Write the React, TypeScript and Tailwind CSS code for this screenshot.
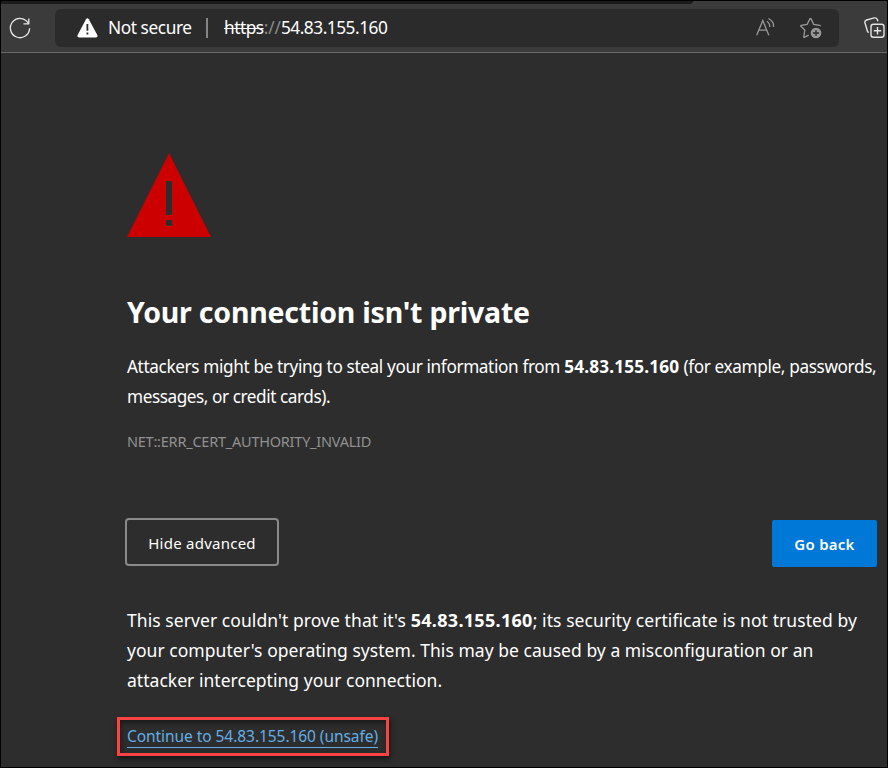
function Toolbar() {
  return (
    <header className="flex h-[52px] flex-col border-b border-[#686868] bg-[#3b3b3b]">
      <div className="h-[3px] w-[692px] shrink-0 rounded-br-lg bg-[#1b1b1b]" />
      <div className="mt-[5px] flex h-[38px] items-center">
        <svg className="ml-[7px] -mt-px shrink-0" width="24" height="24" viewBox="0 0 24 24" fill="none" stroke="#e8e8e8" strokeWidth="1.3">
          <path d="M20.5 7.6A9.6 9.6 0 1 0 21.6 12.3" />
          <path d="M20.8 2.5v5.3h-5.4" />
        </svg>
        <div className="ml-[23px] flex h-[38px] w-[784px] shrink-0 items-center rounded-md bg-[#2b2b2b]">
          <svg className="ml-[22px] -mt-px shrink-0" width="21" height="20" viewBox="0 0 21 20">
            <path d="M9 1.3Q10.4-.6 11.8 1.3L20.4 17.2Q21 19.2 19 19.4H2Q0 19.2.5 17.2Z" fill="#fff" />
            <path d="M10.4 6v6.8M10.4 14.5v2" stroke="#2b2b2b" strokeWidth="1.8" />
          </svg>
          <span className="ml-[10px] -mt-px w-[84px] whitespace-nowrap text-[17.3px] leading-6 tracking-[-0.43px]">Not secure</span>
          <span className="ml-[14px] h-5 w-[2px] bg-[#858585]" />
          <span className="ml-4 -mt-px whitespace-nowrap text-[17.3px] leading-6 tracking-[-0.48px]">
            <span className="line-through decoration-1">https</span>
            <span className="tracking-[-0.1px] text-[#8c8c8c]">://</span>54.83.155.160
          </span>
          <span className="grow" />
          <svg className="mr-[24px] -mt-[2px]" width="20" height="20" viewBox="0 0 20 20" fill="none" stroke="#999" strokeWidth="1.3">
            <path d="M.7 18.3 6.8 3.5l6 14.8M2.8 13.2h8" />
            <path d="M10.8 4.3Q14 6.2 13.7 10M12.4 1.5Q18 4.2 17.6 10" />
          </svg>
          <svg className="mr-[17px]" width="22" height="22" viewBox="0 0 22 22" fill="none" stroke="#999" strokeWidth="1.3">
            <path d="M8.7 18.1 4.3 20.3Q3.7 20.5 3.8 19.7L4.8 13 .9 9.2Q.4 8.5 1.2 8.3L7.1 7.4 10 1.7Q10.5 1 11 1.7L13.7 7.4 19.8 8.3Q20.5 8.6 20 9.2" />
            <circle cx="16" cy="16" r="5.3" fill="#999" stroke="none" />
            <path d="M16 12.9v6.2M12.9 16h6.2" stroke="#2b2b2b" />
          </svg>
        </div>
        <svg className="ml-[25px] shrink-0" width="21" height="22" viewBox="0 0 21 22" fill="none" stroke="#e4e4e4" strokeWidth="1.4">
          <path d="M4.9 15.5 3.6 14.8 1 6Q.4 3.8 2.6 3L10.2.9Q12.4.5 13.4 2.5L13.8 4.3" />
          <rect x="7" y="7.2" width="13" height="13" rx="2.5" />
          <path d="M13.5 10v7.4M9.8 13.7h7.4" />
        </svg>
      </div>
    </header>
  );
}

export default function App() {
  return (
    <div className="flex h-[768px] w-[888px] flex-col overflow-hidden border border-black bg-[#2d2d2d] font-['Noto_Sans','Open_Sans',sans-serif] text-white">
      <Toolbar />
      <main className="flex flex-col pl-[126px] whitespace-nowrap">
        <svg className="mt-[100px]" width="84" height="84" viewBox="0 0 84 84">
          <path d="M42 0 84 84H0Z" fill="#c00" />
          <path d="M39 28h6v34h-6zM39 67h6v6h-6z" fill="#2d2d2d" />
        </svg>
        <h1 className="mt-[55px] text-[28.5px] leading-10 font-bold tracking-[-0.22px]">Your connection isn't private</h1>
        <div className="mt-[20px] text-[17.2px] leading-[30px]">
          <p className="tracking-[-0.37px]">Attackers might be trying to steal your information from <b className="tracking-[0.18px]">54.83.155.160</b> (for example, passwords,</p>
          <p className="tracking-[-0.44px]">messages, or credit cards).</p>
        </div>
        <p className="mt-[17px] text-[14.5px] leading-6 tracking-[-0.23px] text-[#919191]">NET::ERR_CERT_AUTHORITY_INVALID</p>
        <div className="mt-[64px] -ml-[2px] flex h-[49px] items-center justify-between pr-[10px]">
          <button className="h-[48px] w-[154px] rounded-[4px] border-2 border-[#8a8a8a] pt-[3px] text-[15px] tracking-[0.25px]">Hide advanced</button>
          <button className="mt-[3px] h-[47px] w-[105px] rounded-[2px] bg-[#0078d7] pt-[2px] text-[15px] font-semibold tracking-[0.25px]">Go back</button>
        </div>
        <div className="mt-[39px] text-[17.5px] leading-[30px]">
          <p className="tracking-[0.07px]">This server couldn't prove that it's <b className="text-[18px] leading-none tracking-[0.3px]">54.83.155.160</b>; its security certificate is not trusted by</p>
          <p className="tracking-[0.04px]">your computer's operating system. This may be caused by a misconfiguration or an</p>
          <p className="tracking-[0.03px]">attacker intercepting your connection.</p>
        </div>
        <div className="mt-[22px] -ml-[10px] flex h-[39px] w-[272px] items-center border-[3px] border-[#fc4343] pl-[7px] shadow-[1px_3px_5px_#151515,inset_1px_3px_5px_#1b1b1b]">
          <a className="block h-[23px] border-b border-[#63ade5] text-[15.5px] leading-[22px] tracking-[-0.06px] text-[#63ade5]">Continue to 54.83.155.160 (unsafe)</a>
        </div>
      </main>
    </div>
  );
}
